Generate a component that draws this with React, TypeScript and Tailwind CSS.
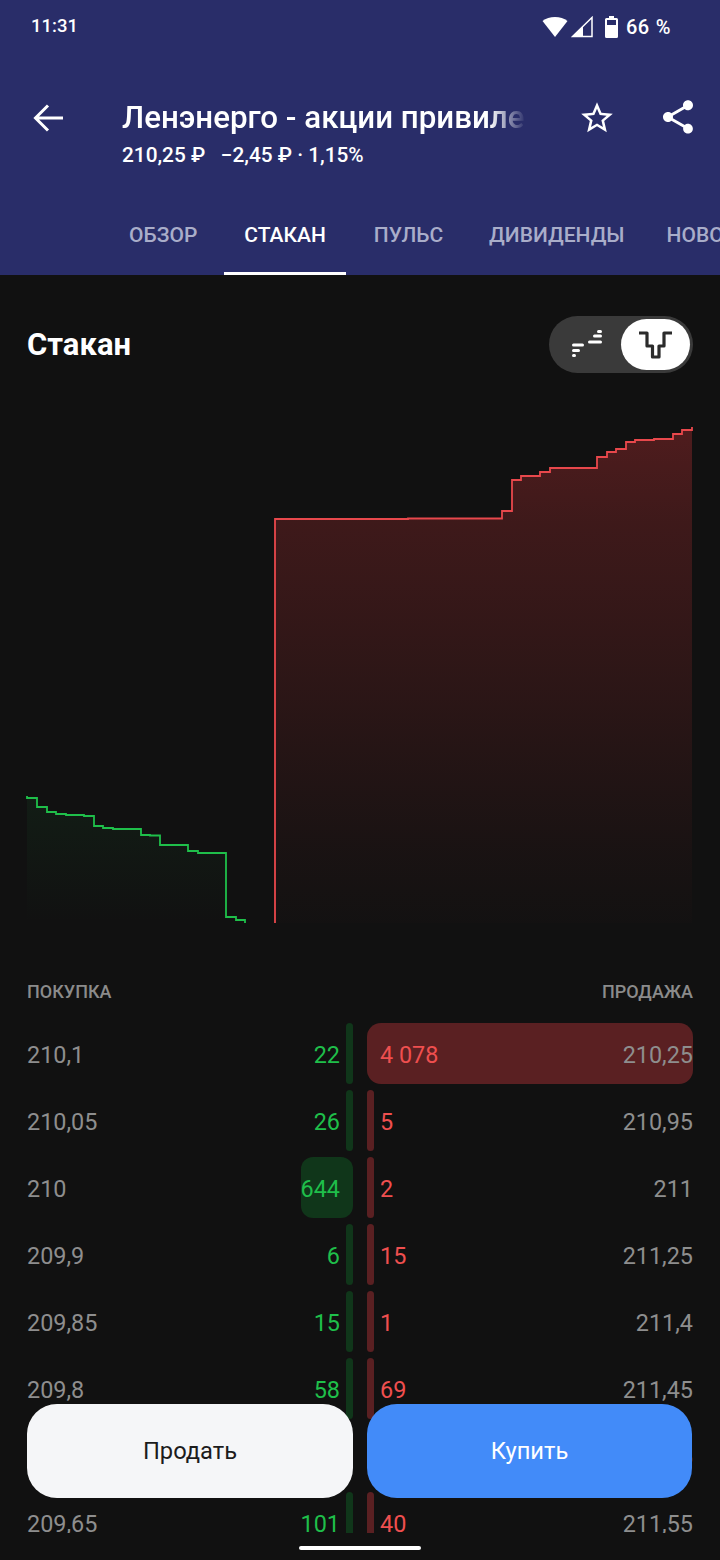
import React from "react";

interface BookRow {
  bid: string;
  bidQty: string;
  bidWidth: number;
  askQty: string;
  askWidth: number;
  ask: string;
}

// row 7 sits fully behind the buttons, no bars visible there
const rows: BookRow[] = [
  { bid: "210,1", bidQty: "22", bidWidth: 7, askQty: "4 078", askWidth: 326, ask: "210,25" },
  { bid: "210,05", bidQty: "26", bidWidth: 7, askQty: "5", askWidth: 7, ask: "210,95" },
  { bid: "210", bidQty: "644", bidWidth: 52, askQty: "2", askWidth: 7, ask: "211" },
  { bid: "209,9", bidQty: "6", bidWidth: 7, askQty: "15", askWidth: 7, ask: "211,25" },
  { bid: "209,85", bidQty: "15", bidWidth: 7, askQty: "1", askWidth: 7, ask: "211,4" },
  { bid: "209,8", bidQty: "58", bidWidth: 7, askQty: "69", askWidth: 7, ask: "211,45" },
  { bid: "209,7", bidQty: "33", bidWidth: 0, askQty: "12", askWidth: 0, ask: "211,5" },
  { bid: "209,65", bidQty: "101", bidWidth: 7, askQty: "40", askWidth: 7, ask: "211,55" },
];

const tabs = [
  { label: "ОБЗОР", cls: "px-[20px] ml-[109px] text-[#a9adc9]" },
  { label: "СТАКАН", cls: "px-[20px] ml-[7px] text-white border-b-[3px] border-white" },
  { label: "ПУЛЬС", cls: "px-[20px] ml-[8px] text-[#a9adc9]" },
  { label: "ДИВИДЕНДЫ", cls: "px-[20px] ml-[6px] text-[#a9adc9]" },
  { label: "НОВОСТИ", cls: "px-[20px] ml-[2px] text-[#a9adc9]" },
];

const askPath =
  "M275 923V519H408V518.500H502V511H512V480H521V476H540V472H550V468H597V457H607V452H616V449H626V442H635V440H654V439H673V434H682V430H692V427";
const bidPath =
  "M27 796V798H37V807H47V812H56V814H66V815H84V816H94V826H103V828H113V829H141V835H150V835.500H160V845H188V851H198V853H226V917H236V920H245V923";

function StatusBar() {
  return (
    <div className="h-[54px] flex items-center justify-between pl-[31px] pr-[49px] text-white font-medium">
      <span className="text-[18.500px]">11:31</span>
      <div className="flex items-center">
        <svg width="26" height="22" viewBox="0 0 26 22" className="mr-[3px]">
          <path d="M0.500 5C3.800 2.300 8.200 1 13 1s9.200 1.300 12.500 4L13 21z" fill="#fff" />
        </svg>
        <svg width="22" height="22" viewBox="0 0 22 22" className="mr-[12px]">
          <path d="M21 1.500V20.500H1.500z" fill="none" stroke="#fff" strokeWidth="1.500" />
          <path d="M12 10V20.500H1.500z" fill="#fff" />
        </svg>
        <svg width="13" height="22" viewBox="0 0 13 22" className="mr-[8px]">
          <path
            fillRule="evenodd"
            d="M4 0h5v2h2.500A1.500 1.500 0 0 1 13 3.500v17a1.500 1.500 0 0 1-1.500 1.500h-10A1.500 1.500 0 0 1 0 20.500v-17A1.500 1.500 0 0 1 1.500 2H4zM2 4v5h9V4z"
            fill="#fff"
          />
        </svg>
        <span className="text-[20px] tracking-[0.4px] [word-spacing:1px]">66 %</span>
      </div>
    </div>
  );
}

function Header() {
  return (
    <header className="h-[275px] bg-[#292d69] flex flex-col shrink-0">
      <StatusBar />
      <div className="h-[146px] flex">
        <svg width="30" height="30" viewBox="0 0 30 30" fill="none" stroke="#fff" strokeWidth="3" className="ml-[33px] mt-[49px] shrink-0">
          <path d="M30 15H3M15 2.500L2.500 15 15 27.500" />
        </svg>
        <div className="ml-[59px] mt-[44px] w-[404px] shrink-0">
          <div className="text-[31.300px] leading-[40px] font-medium text-white whitespace-nowrap overflow-hidden [mask-image:linear-gradient(to_right,#000_91%,transparent_100%)]">
            Ленэнерго - акции привилегированные
          </div>
          <div className="text-[20.800px] leading-[26px] mt-[4px] font-medium text-white whitespace-pre">
            210,25 ₽{"   "}−2,45 ₽ · 1,15%
          </div>
        </div>
        <svg width="38" height="38" viewBox="0 0 24 24" fill="#fff" className="ml-[52px] mt-[45px] shrink-0">
          <path d="M22 9.240l-7.190-.620L12 2 9.190 8.630 2 9.240l5.460 4.730L5.820 21 12 17.270 18.180 21l-1.630-7.030L22 9.240zM12 15.400l-3.760 2.270 1-4.280-3.320-2.880 4.380-.380L12 6.100l1.710 4.040 4.380.380-3.320 2.880 1 4.280L12 15.400z" />
        </svg>
        <svg width="40" height="40" viewBox="0 0 24 24" fill="#fff" className="ml-[42px] mt-[43px] shrink-0">
          <path d="M18 16.080c-.760 0-1.440.300-1.960.770L8.910 12.700c.050-.230.090-.460.090-.700s-.040-.470-.090-.700l7.050-4.110c.540.500 1.250.810 2.040.810 1.660 0 3-1.340 3-3s-1.340-3-3-3-3 1.340-3 3c0 .240.040.470.090.700L8.040 9.810C7.500 9.310 6.790 9 6 9c-1.660 0-3 1.340-3 3s1.340 3 3 3c.790 0 1.500-.310 2.040-.810l7.120 4.160c-.050.210-.080.430-.080.650 0 1.610 1.310 2.920 2.920 2.920 1.610 0 2.920-1.310 2.920-2.920s-1.310-2.920-2.920-2.920z" />
        </svg>
      </div>
      <nav className="h-[75px] flex overflow-hidden text-[21px] font-medium whitespace-nowrap">
        {tabs.map((tab) => (
          <div key={tab.label} className={`h-[75px] pt-[21px] leading-[29px] shrink-0 ${tab.cls}`}>
            {tab.label}
          </div>
        ))}
      </nav>
    </header>
  );
}

function ViewToggle() {
  return (
    <div className="w-[144px] h-[57px] rounded-full bg-[#3a3a3a] flex items-center justify-between pl-[21px] pr-[3px]">
      <svg width="34" height="30" viewBox="0 0 34 30" fill="#fff">
        <rect x="2" y="13.500" width="12" height="3" rx="1.500" />
        <rect x="2" y="19" width="8" height="3" rx="1.500" />
        <rect x="2" y="24" width="4" height="3" rx="1.500" />
        <rect x="18" y="10.500" width="14" height="3" rx="1.500" />
        <rect x="23" y="4.500" width="9" height="3" rx="1.500" />
        <rect x="27" y="0" width="5" height="3" rx="1.500" />
      </svg>
      <div className="w-[69px] h-[51px] rounded-full bg-white flex items-center justify-center">
        <svg width="36" height="32" viewBox="0 0 36 32" fill="none" stroke="#2b2b2b" strokeWidth="3.200" strokeLinejoin="round">
          <path d="M1 4H9V17H14.500V28H21V17H26V4H34" />
        </svg>
      </div>
    </div>
  );
}

function DepthChart() {
  return (
    <svg width="720" height="540" viewBox="0 400 720 540" className="block">
      <defs>
        <linearGradient id="askFill" x1="0" y1="0" x2="0" y2="1">
          <stop offset="0" stopColor="#e8383c" stopOpacity="0.29" />
          <stop offset="0.19" stopColor="#e8383c" stopOpacity="0.21" />
          <stop offset="0.55" stopColor="#e8383c" stopOpacity="0.12" />
          <stop offset="0.85" stopColor="#e8383c" stopOpacity="0.04" />
          <stop offset="1" stopColor="#e8383c" stopOpacity="0.01" />
        </linearGradient>
        <linearGradient id="bidFill" x1="0" y1="0" x2="0" y2="1">
          <stop offset="0" stopColor="#22b84c" stopOpacity="0.07" />
          <stop offset="1" stopColor="#22b84c" stopOpacity="0" />
        </linearGradient>
      </defs>
      <path d={`${askPath}V923H275Z`} fill="url(#askFill)" />
      <path d={`${bidPath}H27Z`} fill="url(#bidFill)" />
      <path d={askPath} fill="none" stroke="#e8484c" strokeWidth="1.800" />
      <path d={bidPath} fill="none" stroke="#1fbf4a" strokeWidth="1.800" />
    </svg>
  );
}

function Row({ row }: { row: BookRow }) {
  return (
    <div className="h-[61px] flex text-[23.400px] leading-[65px] shrink-0">
      <div className="w-[326px] relative flex justify-between pr-[13px] shrink-0">
        <div
          className="absolute right-0 top-0 bottom-0 bg-[#10361a]"
          style={{ width: row.bidWidth, borderRadius: row.bidWidth > 10 ? 12 : 4 }}
        />
        <span className="relative text-[#8e8e8e]">{row.bid}</span>
        <span className="relative text-[#1fbf4a]">{row.bidQty}</span>
      </div>
      <div className="w-[326px] ml-[14px] relative flex justify-between pl-[13px] shrink-0">
        <div
          className="absolute left-0 top-0 bottom-0 bg-[#5a2022]"
          style={{ width: row.askWidth, borderRadius: row.askWidth > 10 ? 14 : 4 }}
        />
        <span className="relative text-[#ef4f4f]">{row.askQty}</span>
        <span className="relative text-[#8e8e8e]">{row.ask}</span>
      </div>
    </div>
  );
}

export default function App() {
  return (
    <div
      className="w-[720px] h-[1560px] relative overflow-hidden bg-[#111111] flex flex-col"
      style={{ fontFamily: "Roboto, sans-serif" }}
    >
      <Header />
      <div className="h-[125px] flex justify-between items-start px-[27px] pt-[41px] shrink-0">
        <h2 className="text-[31px] leading-[58px] font-bold text-white">Стакан</h2>
        <ViewToggle />
      </div>
      <div className="shrink-0">
        <DepthChart />
      </div>
      <div className="flex justify-between px-[27px] text-[18px] leading-[22px] font-medium text-[#8b8b8b] mt-[41px] shrink-0">
        <span>ПОКУПКА</span>
        <span>ПРОДАЖА</span>
      </div>
      <div className="mt-[20px] h-[510px] overflow-hidden flex flex-col gap-[6px] pl-[27px] shrink-0">
        {rows.map((row) => (
          <Row key={row.bid} row={row} />
        ))}
      </div>

      <div className="absolute left-[27px] top-[1404px] flex gap-[14px]">
        <button className="w-[326px] h-[94px] rounded-[30px] bg-[#f5f6f8] text-[#1c1c1c] text-[23.700px] pt-[1px]">Продать</button>
        <button className="w-[325px] h-[94px] rounded-[30px] bg-[#428bf9] text-white text-[23.700px] pt-[1px]">Купить</button>
      </div>
      <div className="absolute left-[299px] top-[1546px] w-[122px] h-[4px] rounded-full bg-white" />
    </div>
  );
}
